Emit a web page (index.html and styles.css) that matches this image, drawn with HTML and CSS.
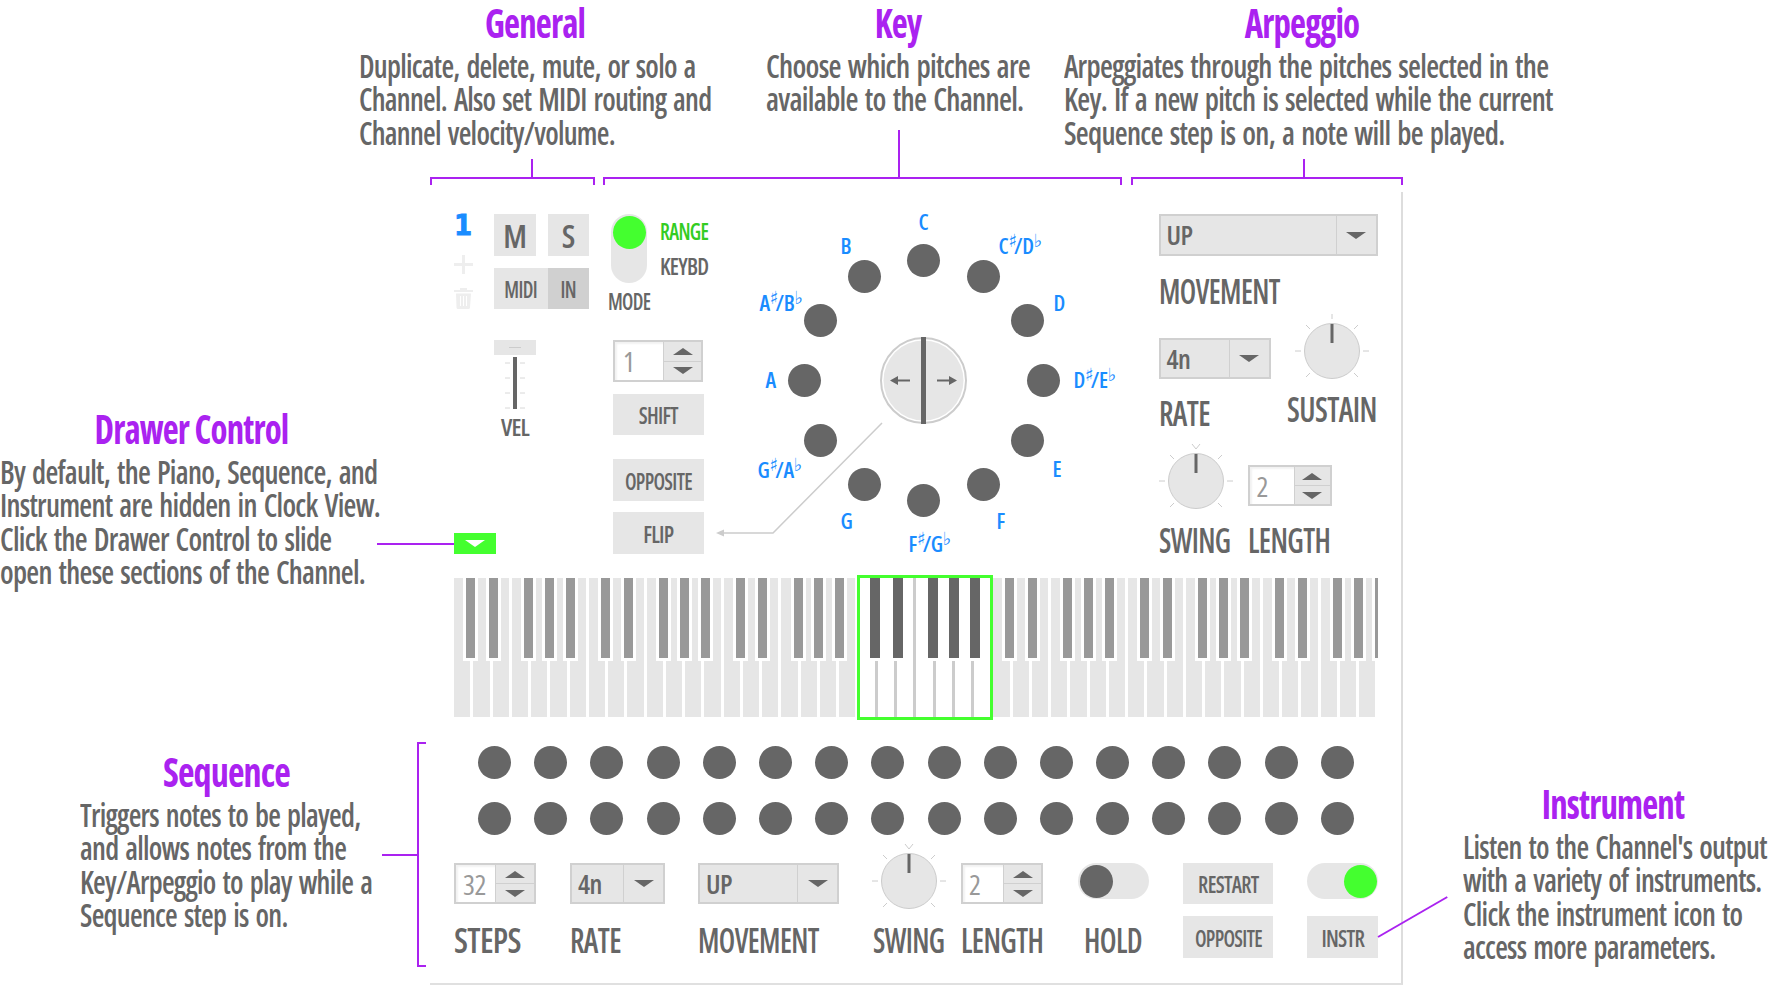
FILE: index.html
```html
<!doctype html>
<html lang="en">
<head>
<meta charset="utf-8">
<title>Channel overview</title>
<link rel="stylesheet" href="styles.css">
</head>
<body>
<div class="page">
  <header class="top-notes">
    <section class="note note-general">
      <h2>General</h2>
      <p>Duplicate, delete, mute, or solo a<br>Channel. Also set MIDI routing and<br>Channel velocity/volume.</p>
    </section>
    <section class="note note-key">
      <h2>Key</h2>
      <p>Choose which pitches are<br>available to the Channel.</p>
    </section>
    <section class="note note-arp">
      <h2>Arpeggio</h2>
      <p>Arpeggiates through the pitches selected in the<br>Key. If a new pitch is selected while the current<br>Sequence step is on, a note will be played.</p>
    </section>
  </header>
  <div class="brackets">
    <div class="bracket bracket-general"></div>
    <div class="bracket bracket-key"></div>
    <div class="bracket bracket-arp"></div>
  </div>

  <aside class="left-notes">
    <section class="note note-drawer">
      <h2>Drawer Control</h2>
      <p>By default, the Piano, Sequence, and<br>Instrument are hidden in Clock View.<br>Click the Drawer Control to slide<br>open these sections of the Channel.</p>
    </section>
    <section class="note note-seq">
      <h2>Sequence</h2>
      <p>Triggers notes to be played,<br>and allows notes from the<br>Key/Arpeggio to play while a<br>Sequence step is on.</p>
    </section>
  </aside>

  <main class="panel">
    <div class="upper">
      <div class="general">
        <div class="gen-grid">
          <div class="chan-icons">
            <span class="chan-num">1</span>
            <svg class="icon-plus" viewBox="0 0 19 19" width="19" height="19"><path d="M8 0h3v8h8v3h-8v8H8v-8H0V8h8z"/></svg>
            <svg class="icon-trash" viewBox="0 0 19 21" width="19" height="21"><path d="M6 0h7v2h6v2H0V2h6zM2 5.500h15l-1 14q-.1 1.500-1.500 1.500h-10.500q-1.400 0-1.500-1.500zM6 8v10h1V8zm3 0v10h1V8zm3 0v10h1V8z" fill-rule="evenodd"/></svg>
          </div>
          <div class="gen-controls">
            <div class="ms-row">
              <button class="btn btn-ms">M</button>
              <button class="btn btn-ms btn-s">S</button>
            </div>
            <div class="midi-row">
              <span class="midi-a"><span class="sq w85">MIDI</span></span>
              <span class="midi-b"><span class="sq w85">IN</span></span>
            </div>
            <div class="vel">
              <div class="vel-cap"><i></i></div>
              <svg class="vel-track" viewBox="0 0 42 52" width="42" height="52">
                <path d="M11 6h5M26 6h5M11 21h5M26 21h5M11 36h5M26 36h5M11 51h5M26 51h5" stroke="#d8d8d8" fill="none"/>
                <rect x="19" y="0" width="4" height="52" fill="#666"/>
              </svg>
              <span class="lbl-s vel-label">VEL</span>
            </div>
          </div>
        </div>
        <button class="drawer-btn"><i class="tri tri-white"></i></button>
      </div>

      <div class="mode">
        <div class="mode-row">
          <div class="toggle-v"><i class="knob knob-green"></i></div>
          <div class="mode-labels">
            <span class="lbl-s mode-range">RANGE</span>
            <span class="lbl-s mode-keybd">KEYBD</span>
          </div>
        </div>
        <span class="lbl-s mode-label">MODE</span>
        <div class="spin spin-mode">
          <span class="spin-val">1</span>
          <span class="spin-btns"><b><i class="tri tri-up"></i></b><b><i class="tri tri-down"></i></b></span>
        </div>
        <button class="btn btn-wide btn-shift"><span class="sq w90">SHIFT</span></button>
        <button class="btn btn-wide btn-opp"><span class="sq w87">OPPOSITE</span></button>
        <button class="btn btn-wide btn-flip"><span class="sq w95">FLIP</span></button>
      </div>

      <div class="clock">
        <svg class="clock-wire" viewBox="0 0 455 340" width="455" height="340">
          <path d="M178 209 69 319H19" fill="none" stroke="#ccc" stroke-width="1.500"/>
          <path d="M12 319l8-3.500v7z" fill="#ccc"/>
        </svg>
        <i class="pitch p0"></i><i class="pitch p1"></i><i class="pitch p2"></i><i class="pitch p3"></i>
        <i class="pitch p4"></i><i class="pitch p5"></i><i class="pitch p6"></i><i class="pitch p7"></i>
        <i class="pitch p8"></i><i class="pitch p9"></i><i class="pitch p10"></i><i class="pitch p11"></i>
        <span class="nm n0">C</span>
        <span class="nm n1">C<sup>♯</sup>/D<sup>♭</sup></span>
        <span class="nm n2">D</span>
        <span class="nm n3">D<sup>♯</sup>/E<sup>♭</sup></span>
        <span class="nm n4">E</span>
        <span class="nm n5">F</span>
        <span class="nm n6">F<sup>♯</sup>/G<sup>♭</sup></span>
        <span class="nm n7">G</span>
        <span class="nm n8">G<sup>♯</sup>/A<sup>♭</sup></span>
        <span class="nm n9">A</span>
        <span class="nm n10">A<sup>♯</sup>/B<sup>♭</sup></span>
        <span class="nm n11">B</span>
        <svg class="dial" viewBox="0 0 87 87" width="87" height="87">
          <circle cx="43.500" cy="43.500" r="42.500" fill="#fff" stroke="#ccc" stroke-width="2"/>
          <circle cx="43.500" cy="43.500" r="40" fill="#e6e6e6"/>
          <rect x="41" y="0" width="5" height="87" fill="#666"/>
          <path d="M10 43.500l8-4.500v3.500h12v2H18v3.500zM77 43.500l-8-4.500v3.500H57v2h12v3.500z" fill="#666"/>
        </svg>
      </div>

      <div class="arp">
        <div class="select select-full"><span class="select-val">UP</span><span class="select-btn"><i class="tri tri-down"></i></span></div>
        <span class="lbl lbl-move">MOVEMENT</span>
        <div class="arp-row">
          <div class="arp-rate">
            <div class="select select-rate"><span class="select-val">4n</span><span class="select-btn"><i class="tri tri-down"></i></span></div>
            <span class="lbl lbl-rate">RATE</span>
          </div>
          <div class="arp-sustain">
            <svg class="knob-dial" viewBox="0 0 76 76" width="76" height="76">
              <path d="M38 1v5M1 38h6M69 38h6M12 12l4 4M64 12l-4 4M12 64l4-4M64 64l-4-4" stroke="#ccc" fill="none"/>
              <circle cx="38" cy="38" r="27.500" fill="#e6e6e6" stroke="#ccc"/>
              <rect x="36.500" y="11" width="3" height="19" fill="#666"/>
            </svg>
            <span class="lbl lbl-sustain">SUSTAIN</span>
          </div>
        </div>
        <div class="arp-row">
          <div class="arp-swing">
            <svg class="knob-dial" viewBox="0 0 76 76" width="76" height="76">
              <path d="M34 1l4 5 4-5M1 38h6M69 38h6M12 12l4 4M64 12l-4 4M12 64l4-4M64 64l-4-4" stroke="#ccc" fill="none"/>
              <circle cx="38" cy="38" r="27.500" fill="#e6e6e6" stroke="#ccc"/>
              <rect x="36.500" y="11" width="3" height="19" fill="#666"/>
            </svg>
            <span class="lbl lbl-swing">SWING</span>
          </div>
          <div class="arp-length">
            <div class="spin spin-len">
              <span class="spin-val">2</span>
              <span class="spin-btns"><b><i class="tri tri-up"></i></b><b><i class="tri tri-down"></i></b></span>
            </div>
            <span class="lbl lbl-length">LENGTH</span>
          </div>
        </div>
      </div>
    </div>

    <div class="piano">
      <div class="keys">
        <div class="octave"><i></i><i></i><i></i><i></i><i></i><i></i><i></i><b class="k1"></b><b class="k2"></b><b class="k3"></b><b class="k4"></b><b class="k5"></b></div>
        <div class="octave"><i></i><i></i><i></i><i></i><i></i><i></i><i></i><b class="k1"></b><b class="k2"></b><b class="k3"></b><b class="k4"></b><b class="k5"></b></div>
        <div class="octave"><i></i><i></i><i></i><i></i><i></i><i></i><i></i><b class="k1"></b><b class="k2"></b><b class="k3"></b><b class="k4"></b><b class="k5"></b></div>
        <div class="octave octave-on"><i></i><i></i><i></i><i></i><i></i><i></i><i></i><b class="k1"></b><b class="k2"></b><b class="k3"></b><b class="k4"></b><b class="k5"></b></div>
        <div class="octave"><i></i><i></i><i></i><i></i><i></i><i></i><i></i><b class="k1"></b><b class="k2"></b><b class="k3"></b><b class="k4"></b><b class="k5"></b></div>
        <div class="octave"><i></i><i></i><i></i><i></i><i></i><i></i><i></i><b class="k1"></b><b class="k2"></b><b class="k3"></b><b class="k4"></b><b class="k5"></b></div>
        <div class="octave"><i></i><i></i><i></i><i></i><i></i><i></i><i></i><b class="k1"></b><b class="k2"></b><b class="k3"></b><b class="k4"></b><b class="k5"></b></div>
      </div>
      <div class="octave-frame"></div>
    </div>

    <div class="sequence">
      <div class="seq-bracket"></div>
      <div class="steps">
        <i></i><i></i><i></i><i></i><i></i><i></i><i></i><i></i><i></i><i></i><i></i><i></i><i></i><i></i><i></i><i></i>
        <i></i><i></i><i></i><i></i><i></i><i></i><i></i><i></i><i></i><i></i><i></i><i></i><i></i><i></i><i></i><i></i>
      </div>
      <div class="seq-controls">
        <div class="spin spin-steps">
          <span class="spin-val">32</span>
          <span class="spin-btns"><b><i class="tri tri-up"></i></b><b><i class="tri tri-down"></i></b></span>
        </div>
        <div class="select select-seqrate"><span class="select-val">4n</span><span class="select-btn"><i class="tri tri-down"></i></span></div>
        <div class="select select-seqmove"><span class="select-val">UP</span><span class="select-btn"><i class="tri tri-down"></i></span></div>
        <svg class="knob-dial seq-knob" viewBox="0 0 76 76" width="76" height="76">
          <path d="M34 1l4 5 4-5M1 38h6M69 38h6M12 12l4 4M64 12l-4 4M12 64l4-4M64 64l-4-4" stroke="#ccc" fill="none"/>
          <circle cx="38" cy="38" r="27.500" fill="#e6e6e6" stroke="#ccc"/>
          <rect x="36.500" y="11" width="3" height="19" fill="#666"/>
        </svg>
        <div class="spin spin-seqlen">
          <span class="spin-val">2</span>
          <span class="spin-btns"><b><i class="tri tri-up"></i></b><b><i class="tri tri-down"></i></b></span>
        </div>
        <div class="toggle-h"><i class="knob knob-dark"></i></div>
        <button class="btn btn-seq"><span class="sq w90">RESTART</span></button>
        <div class="toggle-h toggle-on"><i class="knob knob-green"></i></div>

        <span class="lbl seq-lbl lbl-steps">STEPS</span>
        <span class="lbl seq-lbl lbl-rate2">RATE</span>
        <span class="lbl seq-lbl lbl-move2">MOVEMENT</span>
        <span class="lbl seq-lbl lbl-swing">SWING</span>
        <span class="lbl seq-lbl lbl-length">LENGTH</span>
        <span class="lbl seq-lbl seq-hold">HOLD</span>
        <button class="btn btn-seq btn-seq2"><span class="sq w87">OPPOSITE</span></button>
        <button class="btn btn-seq btn-seq2 btn-instr"><span class="sq w92">INSTR</span></button>
      </div>
    </div>
  </main>

  <aside class="right-notes">
    <section class="note note-instr">
      <h2>Instrument</h2>
      <p>Listen to the Channel's output<br>with a variety of instruments.<br>Click the instrument icon to<br>access more parameters.</p>
    </section>
  </aside>
</div>
</body>
</html>
```
FILE: styles.css
```css
* { box-sizing: border-box; }
html, body { margin: 0; background: #fff; }
body {
  font-family: "Open Sans", "Liberation Sans", sans-serif;
  font-stretch: 75%;
  font-weight: 650;
  color: #666;
}
button { font: inherit; color: inherit; border: 0; padding: 0; margin: 0; }
i, b { display: block; }

.page {
  width: 1774px;
  height: 985px;
  overflow: hidden;
  display: grid;
  grid-template-columns: 430px 973px 371px;
  grid-template-rows: 177px 15px 793px;
}

/* annotation text */
.note { white-space: nowrap; }
.note h2 {
  margin: 0 0 5px;
  font-size: 41px;
  line-height: 44px;
  font-weight: 700;
  letter-spacing: -1px;
  text-align: center;
  color: #aa22f0;
  transform: scaleX(.85);
}
.note p {
  margin: 0;
  font-size: 32px;
  line-height: 33.300px;
  letter-spacing: -.8px;
  word-spacing: 2.500px;
  transform: scaleX(.92);
  transform-origin: left top;
}
.top-notes { grid-column: 1 / -1; display: flex; padding-left: 359px; }
.note-general { width: 352px; margin-right: 55px; }
.note-general p { transform: scaleX(.909); }
.note-key { width: 264px; margin-right: 34px; }
.note-key p { transform: scaleX(.932); }
.note-arp { width: 476px; }
.note-arp p { transform: scaleX(.925); }

.brackets { grid-column: 1 / -1; display: flex; padding: 0 0 0 430px; }
.bracket {
  position: relative;
  height: 8px;
  border: 2px solid #aa22f0;
  border-bottom: 0;
}
.bracket::before {
  content: "";
  position: absolute;
  bottom: 100%;
  width: 2px;
  background: #aa22f0;
}
.bracket-general { width: 165px; margin-right: 8px; }
.bracket-general::before { left: 99px; height: 20px; }
.bracket-key { width: 519px; margin-right: 9px; }
.bracket-key::before { left: 293px; height: 49px; }
.bracket-arp { width: 272px; }
.bracket-arp::before { left: 170px; height: 20px; }

.left-notes { padding-top: 214px; }
.note-drawer { width: 383px; }
.note-seq { width: 293px; margin: 161px 0 0 80px; }
.note-seq h2 { transform: scaleX(.88); }
.note-seq p { margin-top: 5px; transform: scaleX(.91); }
.right-notes { padding: 589px 0 0 60px; }
.note-instr { width: 300px; }
.note-instr p { margin-top: 2px; transform: scaleX(.91); }

/* panel */
.panel {
  position: relative;
  padding: 22px 24px 0;
  border-right: 2px solid #ddd;
  border-bottom: 2px solid #e0e0e0;
}
.upper { display: flex; height: 340px; }

.lbl-s { font-size: 24px; line-height: 24px; letter-spacing: -.8px; display: block; transform-origin: left center; }
.lbl { font-size: 34px; line-height: 30px; letter-spacing: -.7px; display: block; white-space: nowrap; transform-origin: left center; transform: scaleX(.88); }

.btn {
  display: flex;
  align-items: center;
  justify-content: center;
  background: #e6e6e6;
  font-size: 24px;
  letter-spacing: -.8px;
}
.sq { display: inline-block; }
.w85 { transform: scaleX(.83); }
.w87 { transform: scaleX(.85); }
.w90 { transform: scaleX(.88); }
.w92 { transform: scaleX(.9); }
.w95 { transform: scaleX(.93); }

/* general */
.general { width: 135px; margin-right: 20px; display: flex; flex-direction: column; justify-content: space-between; }
.gen-grid { display: flex; }
.chan-icons { width: 40px; display: flex; flex-direction: column; align-items: flex-start; }
.chan-num {
  font-family: "DejaVu Sans Condensed", "DejaVu Sans", sans-serif;
  font-stretch: normal;
  font-weight: 700;
  font-size: 29px;
  line-height: 23px;
  width: 17px;
  text-align: center;
  color: #1a8cff;
  -webkit-text-stroke: .8px #1a8cff;
}
.icon-plus { margin-top: 18px; fill: #eee; display: block; }
.icon-trash { margin-top: 14px; fill: #eee; display: block; }
.gen-controls { width: 95px; }
.ms-row { display: flex; gap: 12px; }
.btn-ms { width: 42px; height: 42px; font-size: 32px; letter-spacing: 0; }
.btn-s { width: 41px; }
.midi-row { display: flex; margin-top: 12px; height: 41px; font-size: 24px; line-height: 41px; letter-spacing: -.8px; text-align: center; }
.midi-a { width: 54px; background: #e6e6e6; }
.midi-b { width: 41px; background: #d0d0d0; }
.vel { width: 42px; margin-top: 31px; text-align: center; }
.vel-cap { height: 15px; background: #e6e6e6; display: flex; align-items: center; justify-content: center; }
.vel-cap i { width: 12px; height: 1px; background: #ccc; }
.vel-track { display: block; margin-top: 2px; }
.vel-label { margin-top: 6px; }

.drawer-btn { position: relative; width: 42px; height: 21px; background: #44ff2f; display: flex; align-items: center; justify-content: center; }
.drawer-btn::before {
  content: "";
  position: absolute;
  right: 100%;
  top: 10px;
  width: 77px;
  height: 2px;
  background: #aa22f0;
}

.tri { width: 0; height: 0; border-left: 10.500px solid transparent; border-right: 10.500px solid transparent; }
.tri-white { border-top: 7px solid #fff; }
.tri-up { border-bottom: 7px solid #666; }
.tri-down { border-top: 7px solid #666; }

/* mode */
.mode { width: 95px; display: flex; flex-direction: column; align-items: flex-start; }
.mode-row { display: flex; margin-left: 2px; }
.toggle-v { width: 36px; height: 69px; border-radius: 18px; background: #e6e6e6; padding: 1.500px; }
.knob { width: 33px; height: 33px; border-radius: 50%; }
.knob-green { background: #44ff2f; }
.knob-dark { background: #666; }
.mode-labels { margin-left: 13px; padding-top: 5px; }
.mode-labels .lbl-s + .lbl-s { margin-top: 11px; }
.mode-range { color: #33cc22; transform: scaleX(.85); }
.mode-keybd { transform: scaleX(.92); }
.mode-label { margin: 6px 0 0 -1px; transform: scaleX(.83); }
.spin { display: flex; height: 42px; border: 2px solid #d0d0d0; background: #e6e6e6; }
.spin-mode { width: 90px; margin: 27px 0 0 4px; }
.spin-val {
  flex: 0 0 48px;
  background: #fff;
  color: #999;
  font-size: 28px;
  line-height: 38px;
  padding-left: 8px;
  font-weight: 500;
  box-shadow: inset 2px 2px 2px #f2f2f2;
}
.spin-btns { flex: 1; display: flex; flex-direction: column; border-left: 1px solid #d0d0d0; }
.spin-btns b { flex: 1; display: flex; align-items: center; justify-content: center; }
.spin-btns b + b { border-top: 1px solid #d0d0d0; }
.btn-wide { width: 91px; height: 41px; margin-left: 4px; flex: none; }
.btn-shift { margin-top: 12px; }
.btn-opp { margin-top: 24px; height: 42px; }
.btn-flip { margin-top: 11px; height: 42px; }

/* clock */
.clock { position: relative; width: 455px; height: 340px; flex: none; margin-left: -.5px; }
.clock-wire { position: absolute; left: 0; top: 0; }
.dial { position: absolute; left: 176.500px; top: 123px; }
.pitch { position: absolute; width: 33px; height: 33px; border-radius: 50%; background: #666; }
.p0 { left: 203.500px; top: 29.500px; }
.p1 { left: 263.500px; top: 45.500px; }
.p2 { left: 307.500px; top: 89.500px; }
.p3 { left: 323.500px; top: 149.500px; }
.p4 { left: 307.500px; top: 209.500px; }
.p5 { left: 263.500px; top: 253.500px; }
.p6 { left: 203.500px; top: 269.500px; }
.p7 { left: 144px; top: 253.500px; }
.p8 { left: 100px; top: 209.500px; }
.p9 { left: 84px; top: 149.500px; }
.p10 { left: 100px; top: 89.500px; }
.p11 { left: 144px; top: 45.500px; }

.nm {
  position: absolute;
  font-size: 22px;
  line-height: 22px;
  font-weight: 600;
  letter-spacing: -.3px;
  color: #1a8cff;
  white-space: nowrap;
}
.nm sup {
  font-family: "DejaVu Sans", sans-serif;
  font-stretch: normal;
  font-weight: 400;
  font-size: 18px;
  line-height: 0;
  vertical-align: 7px;
  letter-spacing: -3px;
}
.n0 { left: 215px; top: -4px; }
.n1 { left: 295px; top: 20px; }
.n2 { left: 350px; top: 77px; }
.n3 { left: 370px; top: 154px; }
.n4 { left: 349px; top: 243px; }
.n5 { left: 293px; top: 295px; }
.n6 { left: 205px; top: 318px; }
.n7 { left: 137px; top: 295px; }
.n8 { left: 54px; top: 244px; }
.n9 { left: 62px; top: 154px; }
.n10 { left: 56px; top: 77px; }
.n11 { left: 137px; top: 20px; }

/* arpeggio */
.arp { width: 219px; flex: none; }
.select { display: flex; height: 42px; border: 2px solid #d0d0d0; background: #e6e6e6; }
.select-val { flex: 1; font-size: 27px; line-height: 38px; padding-left: 6px; font-weight: 600; letter-spacing: -.5px; }
.select-btn { width: 40px; display: flex; align-items: center; justify-content: center; border-left: 1.500px solid #d0d0d0; }
.select-full { width: 219px; }
.lbl-move { margin-top: 20px; transform: scaleX(.85); }
.arp-row { display: flex; }
.arp-rate { width: 128px; padding-top: 32px; }
.select-rate { width: 112px; height: 41px; }
.lbl-rate { margin-top: 19px; }
.arp-sustain { width: 91px; padding-top: 7px; }
.knob-dial { display: block; }
.arp-sustain .knob-dial { margin-left: 7px; }
.lbl-sustain { margin-top: 4.500px; transform: scaleX(.89); }
.arp-swing { width: 89px; margin-top: 15px; }
.arp-swing .knob-dial { margin-left: -1px; }
.arp-swing .lbl { margin-top: 6px; }
.lbl-swing { transform: scaleX(.855); }
.lbl-length { transform: scaleX(.87); }
.spin-len { width: 84px; height: 41px; margin-top: 37px; }
.spin-len .spin-val { flex-basis: 44px; padding-left: 7px; }
.arp-length .lbl { margin-top: 19px; }

/* piano */
.piano { position: relative; margin-top: 24px; height: 139px; }
.keys { display: flex; width: 924px; height: 139px; overflow: hidden; }
.octave { position: relative; flex: 0 0 134.820px; display: flex; gap: 3px; padding-right: 3px; }
.octave i { flex: 1; background: #e6e6e6; }
.octave b { position: absolute; top: 0; width: 9px; height: 80px; background: #999; box-shadow: 0 0 0 3px #fff; }
.k1 { left: 12px; }
.k2 { left: 34.800px; }
.k3 { left: 69.900px; }
.k4 { left: 90.800px; }
.k5 { left: 111.800px; }
.octave-on { background: #ccc; }
.octave-on i { background: #fff; }
.octave-on b { background: #666; width: 10px; }
.octave-frame { position: absolute; left: 403px; top: -3px; width: 136px; height: 145px; border: 3px solid #44ff2f; }

/* sequence */
.sequence { position: relative; margin-top: 29px; }
.seq-bracket {
  position: absolute;
  left: -37px;
  top: -4px;
  width: 9px;
  height: 225px;
  border: 2px solid #aa22f0;
  border-right: 0;
}
.seq-bracket::before {
  content: "";
  position: absolute;
  right: 100%;
  top: 110px;
  width: 37px;
  height: 2px;
  background: #aa22f0;
}
.steps {
  display: grid;
  grid-template-columns: repeat(16, 33px);
  column-gap: 23.200px;
  row-gap: 23px;
  padding-left: 24px;
}
.steps i { width: 33px; height: 33px; border-radius: 50%; background: #666; }
.seq-controls {
  margin-top: 28px;
  display: grid;
  grid-template-columns: 116px 128px 175px 88px 117px 105px 124px 71px;
  grid-template-rows: 53px 42px;
  align-items: start;
}
.spin-steps, .spin-seqlen { width: 82px; height: 41px; }
.spin-steps .spin-val, .spin-seqlen .spin-val { flex-basis: 39px; padding-left: 7px; letter-spacing: -.5px; }
.spin-seqlen .spin-val { flex-basis: 40px; padding-left: 6px; }
.select-seqrate { width: 95px; height: 41px; }
.select-seqmove { width: 141px; height: 41px; }
.seq-knob { margin: -20px 0 0 -2px; }
.toggle-h { width: 71px; height: 36px; border-radius: 18px; background: #e6e6e6; padding: 1.500px; display: flex; }
.toggle-on { justify-content: flex-end; }
.btn-seq { width: 90px; height: 41px; }
.btn-seq2 { height: 42px; }
.seq-lbl { line-height: 45px; padding-top: 2px; }
.lbl-steps { transform: scaleX(.97); }
.lbl-rate2 { transform: scaleX(.88); }
.lbl-move2 { transform: scaleX(.85); }
.seq-hold { margin-left: 6px; transform: scaleX(.87); }
.btn-instr { position: relative; width: 71px; }
.btn-instr::after {
  content: "";
  position: absolute;
  left: 100%;
  top: 20px;
  width: 80px;
  height: 2px;
  background: #aa22f0;
  transform: rotate(-30deg);
  transform-origin: left center;
}
```
